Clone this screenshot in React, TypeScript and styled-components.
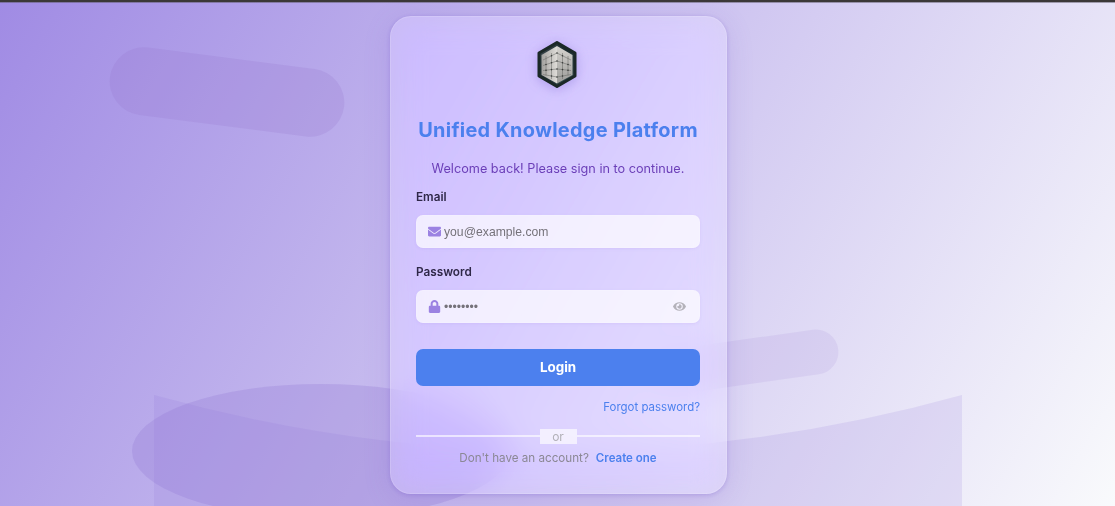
import React from 'react';
import styled, { createGlobalStyle } from 'styled-components';
import { FaEnvelope, FaLock, FaEye } from 'react-icons/fa';

const GlobalStyle = createGlobalStyle`
  * { box-sizing: border-box; }
  body { margin: 0; font-family: Inter, 'Liberation Sans', sans-serif; }
`;

const Page = styled.div`
  position: relative;
  height: 506px;
  overflow: hidden;
  display: flex;
  justify-content: center;
  align-items: flex-start;
  padding: 16px 0 0 2px;
  background: linear-gradient(120deg, #a08be4 0%, #f9fafc 100%);
`;

const TopEdge = styled.div`
  position: absolute;
  inset: 0 0 auto 0;
  height: 3px;
  background: linear-gradient(#3b3838 0 2px, rgba(90, 85, 100, 0.5) 2px 3px);
`;

const Pill = styled.div<{ $x: number; $y: number; $w: number; $h: number; $angle: number; $alpha: number }>`
  position: absolute;
  left: ${p => p.$x}px;
  top: ${p => p.$y}px;
  width: ${p => p.$w}px;
  height: ${p => p.$h}px;
  border-radius: 999px;
  background: rgba(149, 117, 205, ${p => p.$alpha});
  transform: rotate(${p => p.$angle}deg);
`;

const Ellipse = styled.div`
  position: absolute;
  left: 131.5px;
  top: 383.5px;
  width: 378px;
  height: 134px;
  border-radius: 50%;
  background: rgba(144, 117, 210, 0.27);
`;

const Wave = styled.svg`
  position: absolute;
  left: 154px;
  top: 395px;
  width: 808px;
  height: 111px;
`;

const Card = styled.form`
  position: relative;
  width: 337px;
  height: 478px;
  padding: 24px 26px 0 25px;
  display: flex;
  flex-direction: column;
  align-items: stretch;
  border: 1px solid rgba(255, 255, 255, 0.15);
  border-radius: 21px;
  background: rgba(255, 255, 255, 0.21);
  backdrop-filter: blur(16px) saturate(145%);
  box-shadow: 0 5px 27px rgba(120, 90, 213, 0.18), 0 1px 4px rgba(100, 70, 190, 0.25);
`;

const Logo = styled.svg`
  align-self: center;
  width: 42px;
  height: 48px;
  margin-right: 2px;
  filter: drop-shadow(0 2px 6px rgba(110, 80, 200, 0.35));
`;

const Title = styled.h1`
  margin: 26px 0 0;
  font-size: 19.9px;
  line-height: 30px;
  font-weight: 700;
  letter-spacing: 0.3px;
  text-align: center;
  white-space: nowrap;
  color: #4c80ee;
`;

const Welcome = styled.p`
  margin: 14px 0 0;
  font-size: 12.7px;
  line-height: 20px;
  text-align: center;
  color: #6b3fb8;
`;

const Label = styled.label`
  font-size: 11.75px;
  line-height: 16px;
  font-weight: 600;
  color: #2f2848;
`;

const Field = styled.div`
  display: flex;
  align-items: center;
  height: 33px;
  padding: 0 13px 0 11px;
  border-radius: 7px;
  border: 1px solid rgba(255, 255, 255, 0.12);
  background: rgba(255, 255, 255, 0.69);
  box-shadow: 0 1px 3px rgba(127, 90, 213, 0.1);
  color: #9b82e2;
`;

const Input = styled.input`
  flex: 1;
  min-width: 0;
  margin-left: 3px;
  padding: 0;
  border: 0;
  outline: 0;
  background: transparent;
  font-family: 'Liberation Sans', Arial, sans-serif;
  font-size: 12.2px;
  &::placeholder { color: #75727a; opacity: 1; }
`;

const FormGroup = styled.div<{ $gap: number }>`
  display: flex;
  flex-direction: column;
  gap: 10px;
  margin-top: ${p => p.$gap}px;
`;

const LoginButton = styled.button`
  height: 37px;
  margin-top: 26px;
  padding: 0;
  border: 0;
  border-radius: 7px;
  background: #4c80ee;
  color: #fff;
  font: 700 13.4px/37px Inter, sans-serif;
`;

const Forgot = styled.a`
  align-self: flex-end;
  margin-top: 13px;
  font-size: 11.45px;
  line-height: 16px;
  color: #4c80ee;
`;

const Divider = styled.div`
  display: flex;
  align-items: center;
  margin-top: 13px;
  height: 16px;
  &::before, &::after {
    content: '';
    flex: 1;
    height: 1.5px;
    background: rgba(255, 255, 255, 0.62);
  }
`;

const Or = styled.span`
  width: 37px;
  height: 15px;
  background: rgba(255, 255, 255, 0.65);
  font-size: 12px;
  line-height: 15px;
  text-align: center;
  color: #b2b0b8;
`;

const SignUp = styled.p`
  margin: 6px 0 0;
  display: flex;
  justify-content: center;
  gap: 7px;
  font-size: 11.65px;
  line-height: 16px;
  color: #8b8895;
`;

const CreateLink = styled.a`
  font-weight: 600;
  font-size: 11.5px;
  color: #4c80ee;
`;

export default function App() {
  return (
    <>
      <GlobalStyle />
      <Page>
        <Pill $x={108.5} $y={57.5} $w={236} $h={68} $angle={7.3} $alpha={0.22} />
        <Pill $x={658} $y={338.5} $w={181} $h={45} $angle={-8} $alpha={0.12} />
        <Ellipse />
        <Wave viewBox="0 0 808 111">
          <path d="M0 0Q404 112 808 0V111H0Z" fill="rgba(144,117,213,0.15)" />
        </Wave>
        <TopEdge />
        <Card>
          <Logo viewBox="0 0 42 48">
            <defs>
              <linearGradient id="rim" x1="0" y1="0" x2="1" y2="1">
                <stop offset="0" stopColor="#47545a" />
                <stop offset=".45" stopColor="#18272c" />
                <stop offset="1" stopColor="#3e5556" />
              </linearGradient>
              <linearGradient id="left" x1="0" y1="0" x2="1" y2="0">
                <stop offset="0" stopColor="#a3a29f" />
                <stop offset="1" stopColor="#dedcd8" />
              </linearGradient>
              <linearGradient id="right" x1="0" y1="0" x2="0" y2="1">
                <stop offset="0" stopColor="#d5d3cf" />
                <stop offset="1" stopColor="#9c9c99" />
              </linearGradient>
            </defs>
            <path d="M21 1.5L39 12V35L21 45.5L3 35V12Z" fill="url(#rim)" stroke="#1b2827" strokeWidth="3" strokeLinejoin="round" />
            <path d="M21 5L5.5 14V34L21 42.5Z" fill="url(#left)" />
            <path d="M21 5L36.5 14V34L21 42.5Z" fill="url(#right)" />
            <path
              d="M10 15V34.5M15.5 12V38M26.5 12V38M32 15V34.5M7 19L21 12L35 19M7 24.5L21 20L35 24.5M7 29.5L21 28L35 29.5M7 33.5L21 36L35 33.5"
              fill="none"
              stroke="#6b6c69"
              strokeWidth=".55"
            />
            <path
              d="M15.5 14.8V14.81M26.5 14.8V14.81M21 12V12.01M21 20V20.01M21 28V28.01M21 36V36.01M15.5 21.8V21.81M26.5 21.8V21.81M15.5 28.6V28.61M26.5 28.6V28.61M15.5 35V35.01M26.5 35V35.01M10 23.5V23.51M32 23.5V23.51M10 29.2V29.21M32 29.2V29.21"
              stroke="#3a3c3b"
              strokeWidth="1.6"
              strokeLinecap="round"
            />
          </Logo>
          <Title>Unified Knowledge Platform</Title>
          <Welcome>Welcome back! Please sign in to continue.</Welcome>
          <FormGroup $gap={10}>
            <Label htmlFor="email">Email</Label>
            <Field>
              <FaEnvelope size={13} />
              <Input id="email" type="email" placeholder="you@example.com" />
            </Field>
          </FormGroup>
          <FormGroup $gap={16}>
            <Label htmlFor="password">Password</Label>
            <Field>
              <FaLock size={13} />
              <Input id="password" type="password" placeholder="••••••••" />
              <FaEye size={13} color="#b4b2ba" />
            </Field>
          </FormGroup>
          <LoginButton type="button">Login</LoginButton>
          <Forgot>Forgot password?</Forgot>
          <Divider><Or>or</Or></Divider>
          <SignUp>Don't have an account?<CreateLink>Create one</CreateLink></SignUp>
        </Card>
      </Page>
    </>
  );
}
